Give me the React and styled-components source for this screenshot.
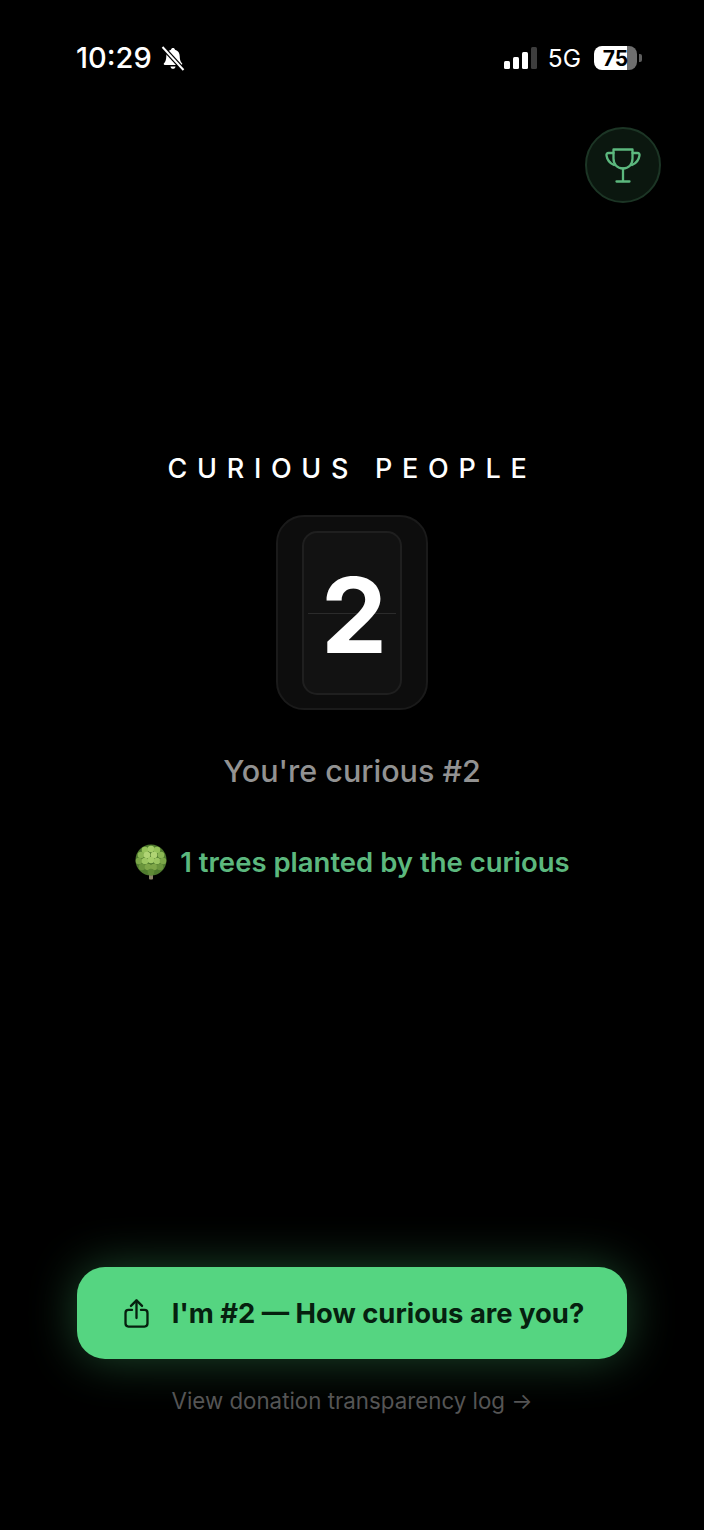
import React from 'react';
import styled, { createGlobalStyle } from 'styled-components';

const GlobalStyle = createGlobalStyle`
	html,
	body {
		margin: 0;
		padding: 0;
		background: #000;
	}

	* {
		box-sizing: border-box;
	}
`;

const BellOff = () => (
	<svg width="26" height="27" viewBox="0 0 26 26" fill="none">
		<path
			d="M13 2.500c-1 0-1.800.7-2 1.700C7.900 5 6.300 7.500 6.300 10.500c0 3.500-.7 5.500-2.300 7.300-.6.700-.2 1.700.8 1.700h16.400c1 0 1.400-1 .8-1.700-1.600-1.800-2.300-3.800-2.300-7.300 0-3-1.600-5.500-4.700-6.300-.2-1-1-1.700-2-1.700z"
			fill="#fff"
		/>
		<path d="M10.500 21h5c-.2 1.400-1.200 2.300-2.500 2.300s-2.300-.9-2.500-2.300z" fill="#fff" />
		<path d="M2.500 1.500l21 23" stroke="#000" strokeWidth="4.500" />
		<path d="M2.500 1.500l21 23" stroke="#fff" strokeWidth="2" />
	</svg>
);

const TrophyIcon = () => (
	<svg width="38" height="38" viewBox="0 0 38 38" fill="none" stroke="#5cb87e" strokeWidth="2.300" strokeLinejoin="round" strokeLinecap="round">
		<path d="M9.500 3.500h19v9c0 6-3.800 10-9.500 10s-9.500-4-9.500-10z" />
		<path d="M9.500 7H4.500c-1.500 0-2.300 1-2 2.500.6 4 2.800 7.500 7.500 9.500" />
		<path d="M28.500 7h5c1.500 0 2.300 1 2 2.500-.6 4-2.800 7.500-7.500 9.500" />
		<path d="M19 22.500V35" />
		<path d="M12.500 35.500h13" />
	</svg>
);

const ShareIcon = () => (
	<svg width="25" height="31" viewBox="0 0 28 34" fill="none" stroke="#06200f" strokeWidth="2.600" strokeLinecap="round" strokeLinejoin="round">
		<path d="M14 22V2.500" />
		<path d="M7.800 8.500L14 2.300l6.200 6.200" />
		<path d="M9 13H5c-2 0-3.300 1.300-3.300 3.300v12c0 2 1.300 3.300 3.300 3.300h18c2 0 3.300-1.300 3.300-3.300v-12c0-2-1.300-3.300-3.300-3.300h-4" />
	</svg>
);

// bumps of the tree crown, outer ones darker
const crown = [
	[11, 6, '#95c25a'],
	[17, 5, '#a4cd68'],
	[23, 6, '#95c25a'],
	[7, 11, '#8ab653'],
	[13, 11, '#b0d474'],
	[20, 11, '#b0d474'],
	[27, 11, '#8ab653'],
	[5, 17, '#7ba648'],
	[11, 17, '#9cc662'],
	[17, 16, '#a4cd68'],
	[23, 17, '#9cc662'],
	[29, 17, '#7ba648'],
	[8, 23, '#6a943c'],
	[14, 23, '#7ea648'],
	[20, 23, '#7ea648'],
	[26, 23, '#6a943c'],
	[17, 28, '#5f8a36'],
];

const TreeIcon = () => (
	<svg width="34" height="36" viewBox="0 0 34 36">
		<rect x="15" y="29" width="4" height="6.500" rx="1" fill="#8a8468" />
		<circle cx="17" cy="16" r="15.500" fill="#4f7a2e" />
		{crown.map(([x, y, fill], i) => (
			<circle key={i} cx={x} cy={y} r="3.300" fill={fill} />
		))}
	</svg>
);

const App = () => {
	const signal = [
		{ height: 8, on: true },
		{ height: 12, on: true },
		{ height: 17, on: true },
		{ height: 22, on: false },
	];

	return (
		<Page>
			<GlobalStyle />
			<StatusBar>
				<TimeGroup>
					<Time>10:29</Time>
					<BellOff />
				</TimeGroup>
				<StatusRight>
					<Signal>
						{signal.map((bar, i) => (
							<SignalBar key={i} $height={bar.height} $on={bar.on} />
						))}
					</Signal>
					<Network>5G</Network>
					<Battery>
						<BatteryLevel>75</BatteryLevel>
					</Battery>
					<BatteryNub />
				</StatusRight>
			</StatusBar>

			<TopRow>
				<TrophyButton>
					<TrophyIcon />
				</TrophyButton>
			</TopRow>

			<Counter>
				<Title>CURIOUS PEOPLE</Title>
				<FlipCard>
					<FlipInner>
						<FlipLine />
						<Digit>2</Digit>
					</FlipInner>
				</FlipCard>
				<Rank>You're curious #2</Rank>
				<Trees>
					<TreeIcon />
					<span>1 trees planted by the curious</span>
				</Trees>
			</Counter>

			<Bottom>
				<ShareButton>
					<ShareIcon />
					<span>I'm #2 — How curious are you?</span>
				</ShareButton>
				<LogLink>View donation transparency log →</LogLink>
			</Bottom>
		</Page>
	);
};

export default App;

const Page = styled.div`
	display: flex;
	flex-direction: column;
	width: 704px;
	height: 1530px;
	overflow: hidden;
	background: #000;
	color: #fff;
	font-family: Inter, 'Liberation Sans', sans-serif;
`;

const StatusBar = styled.div`
	display: flex;
	align-items: center;
	justify-content: space-between;
	height: 36px;
	margin-top: 40px;
	padding: 0 62px 0 76px;
`;

const TimeGroup = styled.div`
	display: flex;
	align-items: center;
	gap: 8px;
`;

const Time = styled.span`
	font-size: 29px;
	font-weight: 500;
	line-height: 36px;
`;

const StatusRight = styled.div`
	display: flex;
	align-items: center;
`;

const Signal = styled.div`
	display: flex;
	align-items: flex-end;
	gap: 3px;
	height: 22px;
`;

const SignalBar = styled.div`
	width: 6px;
	height: ${(props) => props.$height}px;
	border-radius: 1.500px;
	background: ${(props) => (props.$on ? '#fff' : '#3d3d3d')};
`;

const Network = styled.span`
	margin: 0 13px 0 11px;
	font-size: 24.500px;
	font-weight: 400;
`;

const Battery = styled.div`
	display: flex;
	align-items: center;
	justify-content: center;
	width: 43px;
	height: 24px;
	border-radius: 8px;
	background: linear-gradient(90deg, #fff 77%, #6e6e6e 77%);
`;

const BatteryLevel = styled.span`
	color: #000;
	font-size: 21px;
	font-weight: 700;
`;

const BatteryNub = styled.div`
	width: 3px;
	height: 8px;
	margin-left: 2px;
	border-radius: 0 2px 2px 0;
	background: #5e5e5e;
`;

const TopRow = styled.div`
	display: flex;
	justify-content: flex-end;
	margin-top: 51px;
	padding-right: 43px;
`;

const TrophyButton = styled.div`
	display: flex;
	align-items: center;
	justify-content: center;
	width: 76px;
	height: 76px;
	border: 2px solid #1c3525;
	border-radius: 50%;
	background: #0b170f;
`;

const Counter = styled.div`
	display: flex;
	flex-direction: column;
	align-items: center;
	margin-top: 249px;
`;

const Title = styled.div`
	height: 33px;
	font-size: 27px;
	font-weight: 500;
	line-height: 33px;
	letter-spacing: 9.700px;
	white-space: nowrap;
`;

const FlipCard = styled.div`
	display: flex;
	align-items: center;
	justify-content: center;
	width: 152px;
	height: 195px;
	margin-top: 30px;
	border: 2px solid #1a1a1a;
	border-radius: 28px;
	background: #0d0d0d;
`;

const FlipInner = styled.div`
	position: relative;
	display: flex;
	align-items: center;
	justify-content: center;
	width: 100px;
	height: 164px;
	border: 2px solid #1f1f1f;
	border-radius: 15px;
	background: #121212;
`;

const Digit = styled.span`
	position: relative;
	padding: 3px 0 0 4px;
	font-size: 105px;
	font-weight: 700;
	line-height: 1;
`;

const FlipLine = styled.div`
	position: absolute;
	top: 50%;
	left: 4px;
	right: 4px;
	height: 1px;
	background: #2b2b2b;
`;

const Rank = styled.div`
	margin-top: 42px;
	color: #929292;
	font-size: 30.500px;
	font-weight: 500;
	line-height: 38px;
`;

const Trees = styled.div`
	display: flex;
	align-items: center;
	gap: 12px;
	margin-top: 54px;
	color: #5cb87e;
	font-size: 27.500px;
	font-weight: 600;
	line-height: 36px;
`;

const Bottom = styled.div`
	display: flex;
	flex-direction: column;
	align-items: center;
	margin-top: auto;
	padding: 0 0 114px;
`;

const ShareButton = styled.div`
	display: flex;
	align-items: center;
	justify-content: center;
	gap: 23px;
	width: 550px;
	height: 92px;
	padding-left: 4px;
	border-radius: 28px;
	background: #55d581;
	box-shadow: 0 0 48px rgba(85, 213, 129, 0.34);
	color: #06200f;
	font-size: 27.400px;
	font-weight: 700;
`;

const LogLink = styled.div`
	margin-top: 27px;
	color: #555;
	font-size: 22.300px;
	font-weight: 400;
	line-height: 30px;
`;
